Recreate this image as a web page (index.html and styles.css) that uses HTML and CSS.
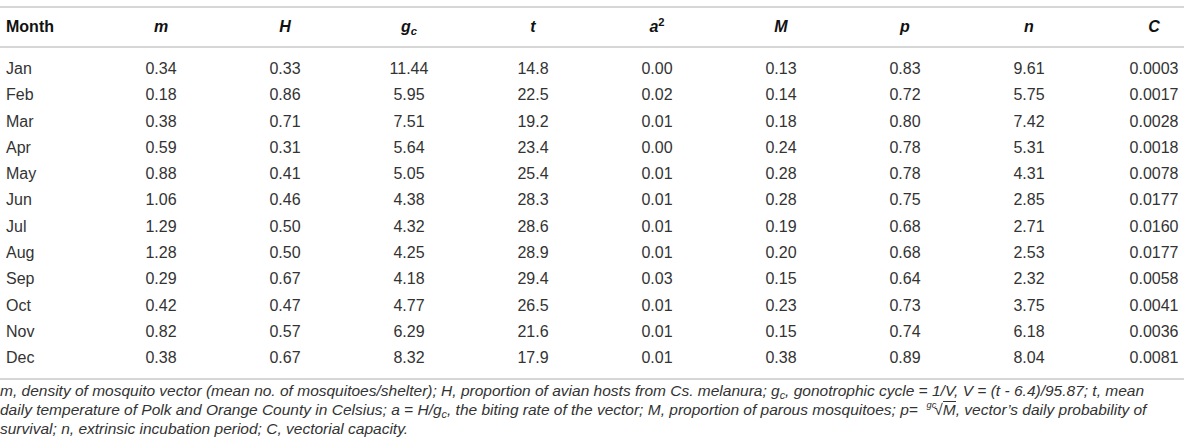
FILE: index.html
```html
<!DOCTYPE html>
<html lang="en">
<head>
    <meta charset="UTF-8">
    <title>Vectorial capacity by month</title>
    <link rel="stylesheet" href="styles.css">
</head>
<body>
    <table class="data-table">
        <colgroup>
            <col class="col-month">
            <col class="col-num"><col class="col-num"><col class="col-num"><col class="col-num">
            <col class="col-num"><col class="col-num"><col class="col-num"><col class="col-num">
            <col class="col-last">
        </colgroup>
        <thead>
            <tr>
                <th class="month">Month</th>
                <th><i>m</i></th>
                <th><i>H</i></th>
                <th><i>g<sub>c</sub></i></th>
                <th><i>t</i></th>
                <th><i>a</i><sup>2</sup></th>
                <th><i>M</i></th>
                <th><i>p</i></th>
                <th><i>n</i></th>
                <th class="last"><i>C</i></th>
            </tr>
        </thead>
        <tbody>
            <tr><td class="month">Jan</td><td>0.34</td><td>0.33</td><td>11.44</td><td>14.8</td><td>0.00</td><td>0.13</td><td>0.83</td><td>9.61</td><td class="last">0.0003</td></tr>
            <tr><td class="month">Feb</td><td>0.18</td><td>0.86</td><td>5.95</td><td>22.5</td><td>0.02</td><td>0.14</td><td>0.72</td><td>5.75</td><td class="last">0.0017</td></tr>
            <tr><td class="month">Mar</td><td>0.38</td><td>0.71</td><td>7.51</td><td>19.2</td><td>0.01</td><td>0.18</td><td>0.80</td><td>7.42</td><td class="last">0.0028</td></tr>
            <tr><td class="month">Apr</td><td>0.59</td><td>0.31</td><td>5.64</td><td>23.4</td><td>0.00</td><td>0.24</td><td>0.78</td><td>5.31</td><td class="last">0.0018</td></tr>
            <tr><td class="month">May</td><td>0.88</td><td>0.41</td><td>5.05</td><td>25.4</td><td>0.01</td><td>0.28</td><td>0.78</td><td>4.31</td><td class="last">0.0078</td></tr>
            <tr><td class="month">Jun</td><td>1.06</td><td>0.46</td><td>4.38</td><td>28.3</td><td>0.01</td><td>0.28</td><td>0.75</td><td>2.85</td><td class="last">0.0177</td></tr>
            <tr><td class="month">Jul</td><td>1.29</td><td>0.50</td><td>4.32</td><td>28.6</td><td>0.01</td><td>0.19</td><td>0.68</td><td>2.71</td><td class="last">0.0160</td></tr>
            <tr><td class="month">Aug</td><td>1.28</td><td>0.50</td><td>4.25</td><td>28.9</td><td>0.01</td><td>0.20</td><td>0.68</td><td>2.53</td><td class="last">0.0177</td></tr>
            <tr><td class="month">Sep</td><td>0.29</td><td>0.67</td><td>4.18</td><td>29.4</td><td>0.03</td><td>0.15</td><td>0.64</td><td>2.32</td><td class="last">0.0058</td></tr>
            <tr><td class="month">Oct</td><td>0.42</td><td>0.47</td><td>4.77</td><td>26.5</td><td>0.01</td><td>0.23</td><td>0.73</td><td>3.75</td><td class="last">0.0041</td></tr>
            <tr><td class="month">Nov</td><td>0.82</td><td>0.57</td><td>6.29</td><td>21.6</td><td>0.01</td><td>0.15</td><td>0.74</td><td>6.18</td><td class="last">0.0036</td></tr>
            <tr><td class="month">Dec</td><td>0.38</td><td>0.67</td><td>8.32</td><td>17.9</td><td>0.01</td><td>0.38</td><td>0.89</td><td>8.04</td><td class="last">0.0081</td></tr>
        </tbody>
    </table>

    <p class="footnote">
        m, density of mosquito vector (mean no. of mosquitoes/shelter); H, proportion of avian hosts from Cs. melanura; g<sub>c</sub>, gonotrophic cycle = 1/V, V = (t - 6.4)/95.87; t, mean daily temperature of Polk and Orange County in Celsius; a = H/g<sub>c</sub>, the biting rate of the vector; M, proportion of parous mosquitoes; p=&nbsp; <span class="root"><sup class="root-index">gc</sup>&radic;<span class="radicand">M</span></span>, vector’s daily probability of survival; n, extrinsic incubation period; C, vectorial capacity.
    </p>
</body>
</html>
```

FILE: styles.css
```css
* {
    margin: 0;
    padding: 0;
    box-sizing: border-box;
}
body {
    background-color: #fff;
    color: #333;
    font-family: 'Liberation Sans', Arial, Helvetica, sans-serif;
    font-size: 16px;
}
.data-table {
    width: 1184px;
    margin-top: 6px;
    border-collapse: collapse;
    table-layout: fixed;
}
.col-month {
    width: 99px;
}
.col-num {
    width: 124px;
}
.col-last {
    width: 93px;
}
.data-table thead tr {
    border-top: 2px solid #d6d6d6;
    border-bottom: 2px solid #d6d6d6;
}
.data-table th {
    height: 40px;
    color: #111;
    font-weight: bold;
    text-align: center;
    vertical-align: middle;
}
.data-table td {
    line-height: 26.3px;
    text-align: center;
    white-space: nowrap;
}
.data-table .month {
    text-align: left;
    padding-left: 6px;
}
.data-table .last {
    padding-left: 33px;
}
.data-table tbody tr:first-child td {
    padding-top: 8px;
}
.data-table tbody tr:last-child td {
    padding-bottom: 6px;
}
.data-table tbody tr:last-child {
    border-bottom: 2px solid #d6d6d6;
}
.data-table sub, .footnote sub {
    font-size: 0.7em;
    vertical-align: -0.25em;
    line-height: 0;
}
.data-table sup {
    font-size: 0.7em;
    vertical-align: 0.55em;
    line-height: 0;
}
.footnote {
    padding: 1px 5px 0 0;
    font-style: italic;
    font-size: 15.5px;
    line-height: 19px;
    color: #333;
}
.root {
    white-space: nowrap;
}
.root-index {
    font-size: 0.6em;
    vertical-align: 0.7em;
    line-height: 0;
    margin-right: -2px;
}
.radicand {
    display: inline-block;
    line-height: 1;
    border-top: 1px solid #333;
}
```
